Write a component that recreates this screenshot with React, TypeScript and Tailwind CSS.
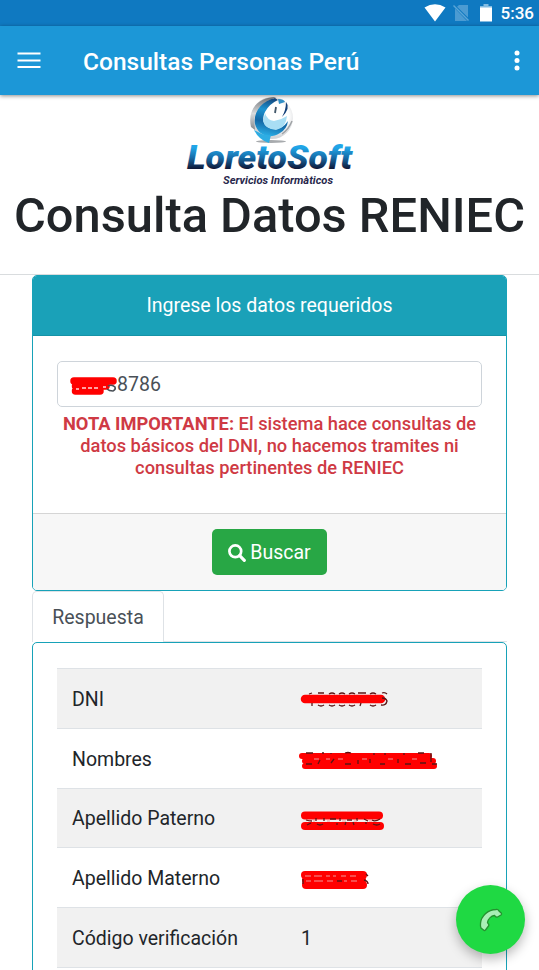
import { useState } from "react";

interface ResultRow {
  label: string;
  value?: string;
  mask?: MaskShape;
}

interface MaskShape {
  width: number;
  strokes: string[];
  ticks: string;
  gaps?: string;
  strokeWidth: number;
}

const ROWS: ResultRow[] = [
  {
    label: "DNI",
    mask: {
      width: 92,
      strokeWidth: 8.5,
      strokes: ["M4 17H80"],
      ticks:
        "M8 12l3-1M17 11h6M28 12q3-2 6 0M38 12q3-2 6 0M48 12q3-2 6 0M57 11h8M69 12q3-2 6 0M81 11q3-1 5 1M11 21v3M17 23q3 2 6 0M28 23q3 2 6 0M38 23q3 2 6 0M48 23q3 2 6 0M60 21l-1 3M69 23q3 2 6 0M80 23q5 1 6-4q-1-3-5-3",
    },
  },
  {
    label: "Nombres",
    mask: {
      width: 140,
      strokeWidth: 6,
      strokes: ["M1 14H128", "M4 19H132", "M4 24H133"],
      ticks:
        "M5 11h7M21 11h2M30 11v1M44 11q3-1 6 0M73 11v2M84 11v2M103 11v2M117 11h6M130 11v9M5 22h6M19 18l-2 4M30 21l3-4M44 22h6M57 18v4M69 21v-4M79 22h5M97 17v4M104 22h6M119 21h6M131 22h5",
      gaps: "M13 17h5M25 17h4M37 17h5M61 17h5M87 17h5M111 17h5",
    },
  },
  {
    label: "Apellido Paterno",
    mask: {
      width: 88,
      strokeWidth: 8,
      strokes: ["M4 13.5H78", "M4 24H79"],
      ticks:
        "M5 18q3 1 6 1M15 16v3M23 16v3M29 17h6M39 16v3M46 18h5M56 16v3M63 17l4 2M71 18q3 2 8-1M6 23l4-2M16 22q3 2 6 0M36 21v2M44 23l1-3M52 20l1 3M65 22v-2M72 22q4 2 7 0",
      gaps: "M12 19h2M26 19h3M41 19h4M53 19h3M68 19h3",
    },
  },
  {
    label: "Apellido Materno",
    mask: {
      width: 72,
      strokeWidth: 8,
      strokes: ["M4 13H62", "M5 23H62", "M5 18H61"],
      ticks: "M2 17v5M65 12l2 2M63 18q4 1 4 4M36 19h5",
      gaps: "M4 14h6M13 14h8M25 14h4M32 14h3M40 14h5M49 14h6M5 19h5M13 19h9M26 19h6M43 19h3M50 19h6",
    },
  },
  { label: "Código verificación", value: "1" },
];

export default function App() {
  const [dni] = useState("8786");

  return (
    <div className="h-[970px] w-[539px] overflow-hidden bg-white font-['Roboto','Liberation_Sans',sans-serif] text-[#212529]">
      <StatusBar />
      <Toolbar />

      <main>
        <div className="flex h-[93px] justify-center pt-px">
          <Logo />
        </div>
        <div className="h-[87px] border-b border-[#d9dcde] pt-px">
          <h1 className="text-center text-[48.8px] leading-[54px] font-medium whitespace-nowrap">
            Consulta Datos RENIEC
          </h1>
        </div>

        <div className="px-8">
          <section className="h-[316px] overflow-hidden rounded-[5px] border border-[#17a2b8]">
            <header className="flex h-[60px] items-center justify-center border-b border-[#1593a7] bg-[#1aa1b8] pt-px text-[19.5px] text-white">
              Ingrese los datos requeridos
            </header>
            <div className="h-[177px] px-6 pt-[25px]">
              <div className="flex h-[46px] items-center rounded-[5px] border border-[#ced4da] pt-px pl-3 text-[19.5px] text-[#495057]">
                <InputMask />
                <span>{dni}</span>
              </div>
              <p className="pt-[6px] text-center text-[18.3px] leading-[22px] font-medium whitespace-nowrap text-[#cf3a44]">
                <b className="font-bold">NOTA IMPORTANTE:</b> El sistema hace consultas de
                <br />
                datos básicos del DNI, no hacemos tramites ni
                <br />
                consultas pertinentes de RENIEC
              </p>
            </div>
            <footer className="flex h-[77px] justify-center border-t border-[#d5d5d5] bg-[#f7f7f7] pt-[15px]">
              <button className="flex h-[46px] w-[115px] items-center justify-center gap-[4px] rounded-[5px] bg-[#28a745] pt-px text-[19.5px] text-white">
                <SearchIcon />
                Buscar
              </button>
            </footer>
          </section>

          <nav className="flex h-[51px] border-b border-[#dee2e6]">
            <div className="flex h-[51px] w-[132px] items-center justify-center rounded-t-[5px] border border-b-0 border-[#dee2e6] bg-white pt-px text-[19.5px] text-[#495057]">
              Respuesta
            </div>
          </nav>

          <section className="h-[400px] rounded-[5px] border border-[#17a2b8] px-6 pt-[25px]">
            {ROWS.map((row, i) => (
              <div
                key={row.label}
                className={`flex h-[59.8px] items-center border-t border-[#dee2e6] pt-[2px] pl-[15px] text-[19.5px] ${
                  i % 2 === 0 ? "bg-[#f1f1f1]" : "bg-white"
                }`}
              >
                <span className="w-[229px]">{row.label}</span>
                {row.mask ? <Mask shape={row.mask} /> : <span>{row.value}</span>}
              </div>
            ))}
            <div className="h-[60px] border-t border-[#dee2e6]" />
          </section>
        </div>
      </main>

      <button className="fixed top-[885px] left-[456px] flex size-[69px] items-center justify-center rounded-full bg-[#1fd943] shadow-[0_5px_12px_rgba(0,0,0,0.28)]">
        <PhoneIcon />
      </button>
    </div>
  );
}

function StatusBar() {
  return (
    <div className="flex h-[26px] items-center justify-end bg-[#0f79c1] pr-[5px] text-white">
      <svg width="22" height="18" viewBox="0 0 22 18" className="mr-[7px]">
        <path d="M.5 3.5Q11-3 21.5 3.5L11 17.5Z" fill="#fff" />
      </svg>
      <svg width="17" height="18" viewBox="0 0 17 18" className="mr-[10px]">
        <path d="M6 1H15V13.5L4 2.7ZM2 4.6V17H14Z" fill="#4b9bd2" />
        <path d="M.5 1.5L15.5 16.5" stroke="#5ba5d7" strokeWidth="1.4" />
      </svg>
      <svg width="12" height="18" viewBox="0 0 12 18" className="mr-[9px]">
        <path d="M3.5 0h5v2H12v3H0V2h3.5Z" fill="#83bce2" />
        <path d="M0 3.5h12V17.5H0Z" fill="#fff" />
      </svg>
      <span className="text-[17px] leading-[26px] font-medium">5:36</span>
    </div>
  );
}

function Toolbar() {
  return (
    <header className="relative flex h-[69px] items-center bg-[#1c97d7] pr-[19px] pl-[17px] text-white shadow-[0_1px_4px_rgba(0,0,0,0.45)]">
      <svg width="24" height="18" viewBox="0 0 24 18" className="mr-[42px]">
        <path d="M.5 1.5H23.5M.5 8.5H23.5M.5 15H23.5" stroke="#fff" strokeWidth="2" />
      </svg>
      <span className="pt-[3px] text-[24.5px] font-medium">Consultas Personas Perú</span>
      <svg width="6" height="22" viewBox="0 0 6 22" className="ml-auto" fill="#fff">
        <circle cx="3" cy="3" r="2.5" />
        <circle cx="3" cy="10.5" r="2.5" />
        <circle cx="3" cy="18" r="2.5" />
      </svg>
    </header>
  );
}

function Logo() {
  return (
    <svg width="170" height="92" viewBox="0 0 170 92" className="overflow-visible">
      <defs>
        <linearGradient id="word" x1="0" y1="0" x2="0" y2="1">
          <stop offset="0.25" stopColor="#20a5e7" />
          <stop offset="0.5" stopColor="#176da9" />
          <stop offset="0.78" stopColor="#101b3b" />
        </linearGradient>
        <linearGradient id="swoosh" x1="0.6" y1="0" x2="0.4" y2="1">
          <stop offset="0" stopColor="#123f76" />
          <stop offset="0.35" stopColor="#1c94d1" />
          <stop offset="0.65" stopColor="#1467a5" />
          <stop offset="1" stopColor="#29aee6" />
        </linearGradient>
        <linearGradient id="shell" x1="0" y1="0" x2="0" y2="1">
          <stop offset="0" stopColor="#6f7276" />
          <stop offset="0.5" stopColor="#d9dbdd" />
          <stop offset="1" stopColor="#85898d" />
        </linearGradient>
        <radialGradient id="ball" cx="0.6" cy="0.45">
          <stop offset="0.6" stopColor="#fff" />
          <stop offset="1" stopColor="#d3d5d8" />
        </radialGradient>
      </defs>
      <ellipse cx="86" cy="45.5" rx="15" ry="1.5" fill="#a8abae" />
      <circle cx="87" cy="22" r="21" fill="url(#ball)" />
      <path d="M66 31C62 14 73 1 91 1Q74 8 69 22L70 34Z" fill="url(#shell)" />
      <path d="M90 2C77 5 68 16 70 28C73 39 84 44 95 37Q102 33 103 25Q97 34 88 33C79 32 76 24 80 16Q84 8 93 4Z" fill="url(#swoosh)" />
      <path d="M80 17Q82 24 89 25Q96 24 102 20Q101 32 91 34Q80 33 78 25Z" fill="#a9def4" />
      <path d="M77 38Q83 40 86 39L84 47Q74 44 69 34Z" fill="#2eade3" />
      <path d="M101 6Q106 12 97 21Q101 14 101 6Z" fill="#123f79" />
      <path d="M93 3Q99 3 100 6L94 8Z" fill="#318fc7" />
      <path d="M91 11L90 17" stroke="#42576a" strokeWidth="1.8" />
      <path d="M97 38Q104 33 107 25" fill="none" stroke="#a0a3a6" strokeWidth="1.5" />
      <text
        x="2"
        y="73"
        textLength="165"
        lengthAdjust="spacingAndGlyphs"
        fill="url(#word)"
        className="font-['Roboto',sans-serif] text-[33px] font-black italic"
      >
        LoretoSoft
      </text>
      <text
        x="38"
        y="88"
        textLength="110"
        lengthAdjust="spacingAndGlyphs"
        fill="#28284c"
        className="font-['Roboto',sans-serif] text-[10.5px] font-bold italic"
      >
        Servicios Informàticos
      </text>
    </svg>
  );
}

function InputMask() {
  return (
    <svg width="47" height="24" viewBox="0 0 47 24" className="overflow-visible">
      <path d="M4 8H43M5.5 13H36M5.5 18H30" stroke="red" strokeWidth="7.5" strokeLinecap="round" />
      <path d="M6 16h3M12 15h4M18 15h4M24 15h4M33 14h3" stroke="#ffd9d9" strokeWidth="1.6" />
      <path d="M38 13q4-2 7 1q1 3-2 4q-4 0-6-2" fill="none" stroke="#495057" strokeWidth="1.6" />
    </svg>
  );
}

// Red marker strokes laid over a hidden value.
function Mask({ shape }: { shape: MaskShape }) {
  return (
    <svg width={shape.width} height="34" viewBox={`0 0 ${shape.width} 34`} className="overflow-visible">
      {shape.strokes.map((d) => (
        <path key={d} d={d} stroke="red" strokeWidth={shape.strokeWidth} strokeLinecap="round" />
      ))}
      <path d={shape.ticks} fill="none" stroke="#5b1515" strokeWidth="1.3" />
      {shape.gaps && <path d={shape.gaps} stroke="#ee9a9a" strokeWidth="1.2" />}
    </svg>
  );
}

function SearchIcon() {
  return (
    <svg width="18" height="18" viewBox="0 0 18 18" fill="none" stroke="#fff">
      <circle cx="7.3" cy="7.3" r="5.9" strokeWidth="2.7" />
      <path d="M11.7 11.7L16.3 16.3" strokeWidth="3.2" strokeLinecap="round" />
    </svg>
  );
}

function PhoneIcon() {
  return (
    <svg width="24" height="24" viewBox="0 0 24 24">
      <path
        d="M1.5 15.5C2 8 9 1.7 17 1.5Q19 1 20 3L22.2 5Q23 6 22 7L18.5 9Q17.5 9.5 16.5 8.5L15.5 7.5C12 8 9 11 8.5 14.5L9.5 16Q10.3 17 9.5 18L6.5 22Q5.5 23 4.5 22L2 20Q1.2 18 1.5 15.5Z"
        fill="#a9efb6"
        stroke="#25912f"
        strokeWidth="1.3"
      />
    </svg>
  );
}
